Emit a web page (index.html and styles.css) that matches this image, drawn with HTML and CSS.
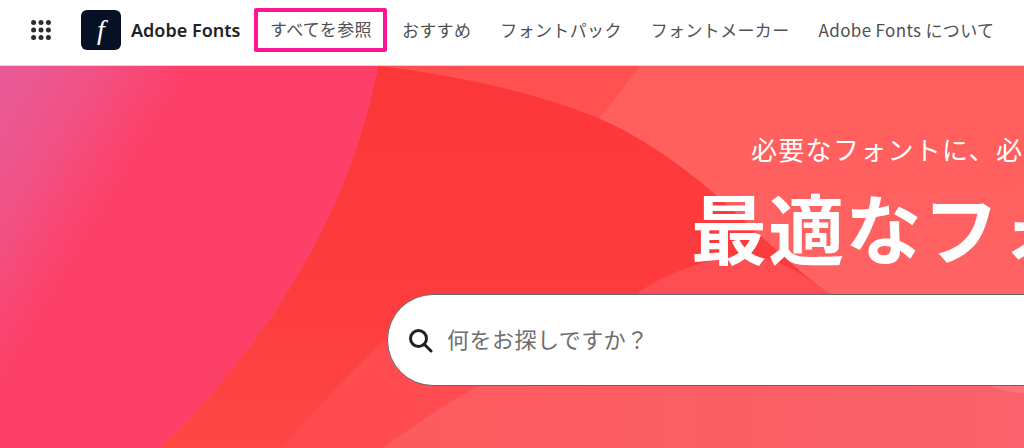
FILE: index.html
```html
<!DOCTYPE html>
<html>
<head>
  <meta charset="utf-8">
  <title>Adobe Fonts</title>
  <link rel="stylesheet" href="styles.css">
</head>

<body>

<!-- header -->
<header class="topbar">
  <svg class="apps" width="20" height="20" viewBox="0 0 20 20" fill="#2c2c2c">
    <circle cx="2.6" cy="2.6" r="2.5"/><circle cx="10" cy="2.6" r="2.5"/><circle cx="17.4" cy="2.6" r="2.5"/>
    <circle cx="2.6" cy="10" r="2.5"/><circle cx="10" cy="10" r="2.5"/><circle cx="17.4" cy="10" r="2.5"/>
    <circle cx="2.6" cy="17.4" r="2.5"/><circle cx="10" cy="17.4" r="2.5"/><circle cx="17.4" cy="17.4" r="2.5"/>
  </svg>
  <div class="logo"><span>f</span></div>
  <div class="brand">Adobe Fonts</div>
  <nav class="nav">
    <a class="nav-item active">すべてを参照</a>
    <a class="nav-item">おすすめ</a>
    <a class="nav-item">フォントパック</a>
    <a class="nav-item">フォントメーカー</a>
    <a class="nav-item">Adobe Fonts について</a>
  </nav>
</header>

<!-- hero -->
<section class="hero">
  <svg class="hero-bg" width="1024" height="382" viewBox="0 0 1024 382">
    <defs>
      <linearGradient id="base" x1="0" y1="0" x2="0" y2="1">
        <stop offset="0" stop-color="#ff5f5c"/>
        <stop offset="0.5" stop-color="#ff6262"/>
        <stop offset="1" stop-color="#f8636e"/>
      </linearGradient>
      <linearGradient id="deep" x1="0" y1="0" x2="0" y2="1">
        <stop offset="0" stop-color="#fc3739"/>
        <stop offset="0.6" stop-color="#fd3c3e"/>
        <stop offset="1" stop-color="#fe4844"/>
      </linearGradient>
      <linearGradient id="pink" gradientUnits="userSpaceOnUse" x1="0" y1="0" x2="139" y2="84">
        <stop offset="0" stop-color="#e85c9a"/>
        <stop offset="0.5" stop-color="#f05286"/>
        <stop offset="1" stop-color="#fd4068"/>
      </linearGradient>
      <linearGradient id="low" x1="0" y1="0" x2="1" y2="0">
        <stop offset="0" stop-color="#fd5b5e"/>
        <stop offset="1" stop-color="#f9626c"/>
      </linearGradient>
    </defs>
    <rect width="1024" height="382" fill="url(#base)"/>
    <path d="M378 0 L640 0 L598 54 L500 40 Z" fill="#ff5150"/>
    <path d="M378 0 C450 8 535 26 598 52 C650 74 700 112 750 160 C785 192 810 215 835 232 L835 382 L160 382 C245 300 345 170 378 0 Z" fill="url(#deep)"/>
    <path d="M282 382 C320 340 350 305 392 268 L500 268 L500 382 Z" fill="#fe4c50"/>
    <path d="M637 228 C660 210 695 196 745 188 C785 192 810 215 835 232 Z" fill="#fe4e54"/>
    <path d="M383 382 C420 355 450 335 480 319 L1024 319 L1024 382 Z" fill="url(#low)"/>
    <path d="M990 320 C1000 324 1012 326 1024 327 L1024 320 Z" fill="#ff7577"/>
    <path d="M0 0 L378 0 C345 170 245 300 160 382 L0 382 Z" fill="url(#pink)"/>
  </svg>
  <div class="hero-copy">
    <p class="lead">必要なフォントに、必要なだけ</p>
    <h1 class="title">最適なフォント</h1>
  </div>
  <div class="search">
    <svg width="25" height="25" viewBox="0 0 25 25" fill="none" stroke="#222" stroke-width="3" stroke-linecap="round">
      <circle cx="10.5" cy="10.5" r="8"/>
      <path d="M16.5 16.5 L23 23"/>
    </svg>
    <span class="search-text">何をお探しですか？</span>
  </div>
</section>

</body>
</html>
```

FILE: styles.css
```css
html, body {
  margin: 0;
  height: 448px;
  overflow: hidden;
}
body {
  font-family: "Noto Sans CJK JP", "Noto Sans", sans-serif;
  background: #fff;
}
.topbar {
  display: flex;
  align-items: center;
  height: 65px;
  box-sizing: border-box;
  padding: 0 0 5px 31px;
  background: #fff;
}
.apps {
  flex: none;
  margin-right: 30px;
}
.logo {
  flex: none;
  display: flex;
  align-items: center;
  justify-content: center;
  width: 40px;
  height: 40px;
  border-radius: 6px;
  background: #061125;
  color: #fff;
  font-family: "Liberation Serif", serif;
  font-style: italic;
  font-size: 28px;
  margin-right: 10px;
}
.brand {
  flex: none;
  font-family: "Noto Sans", sans-serif;
  font-weight: 600;
  font-size: 18px;
  color: #222;
  width: 123px;
  white-space: nowrap;
}
.nav {
  display: flex;
  align-items: center;
  white-space: nowrap;
}
.nav-item {
  font-size: 17px;
  letter-spacing: 0.35px;
  color: #505050;
  margin-right: 29px;
  padding-bottom: 2px;
}
.nav-item:last-child {
  margin-right: 0;
}
.nav-item.active {
  box-sizing: border-box;
  height: 44px;
  line-height: 34px;
  padding: 0 11px 0 12px;
  border: 4px solid #ff1493;
  border-radius: 2px;
  margin-right: 15px;
}
.hero {
  position: relative;
  height: 383px;
  border-top: 1px solid #d8d8d8;
  box-sizing: border-box;
  overflow: hidden;
  padding: 60px 0 0 387px;
}
.hero-bg {
  position: absolute;
  top: 0;
  left: 0;
}
.hero-copy {
  position: relative;
  white-space: nowrap;
  margin-left: 304px;
  color: #fff;
}
.lead {
  margin: 0 0 14px 60px;
  font-size: 26px;
  line-height: 46px;
  letter-spacing: 1.3px;
}
.title {
  margin: 0;
  font-size: 76px;
  line-height: 80px;
  letter-spacing: 1.3px;
  font-weight: 700;
}
.search {
  position: relative;
  display: flex;
  align-items: center;
  gap: 14px;
  width: 800px;
  height: 92px;
  margin-top: 28px;
  box-sizing: border-box;
  padding-left: 20px;
  background: #fff;
  border: 1px solid #666;
  border-radius: 46px;
}
.search-text {
  font-size: 22px;
  color: #6e6e6e;
  letter-spacing: 0.5px;
  white-space: nowrap;
  padding-bottom: 5px;
}
```
